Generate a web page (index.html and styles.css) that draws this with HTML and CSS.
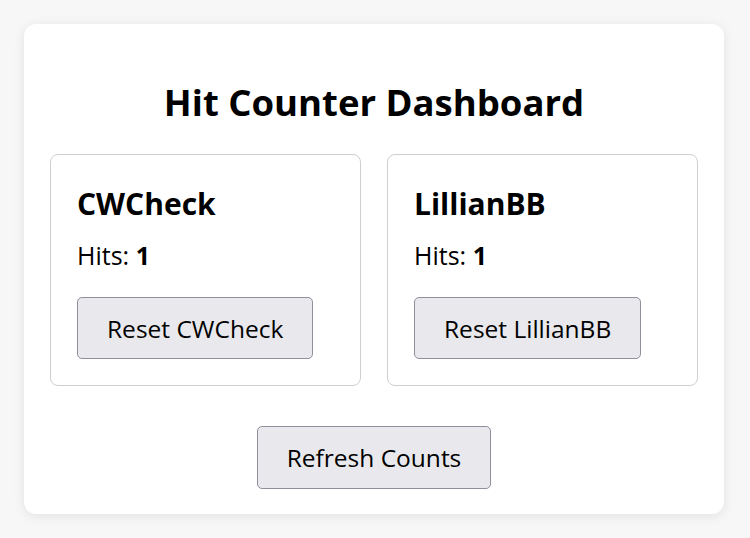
FILE: index.html
```html
<!DOCTYPE html>
<html lang="en">
<head>
<meta charset="utf-8">
<title>Hit Counter Dashboard</title>
<link rel="stylesheet" href="styles.css">
</head>
<body>
<main class="dashboard">
  <h1 class="dashboard-title">Hit Counter Dashboard</h1>
  <div class="counter-grid">
    <section class="counter-card">
      <h2 class="counter-name">CWCheck</h2>
      <p class="counter-hits">Hits: <strong>1</strong></p>
      <button class="btn" type="button">Reset CWCheck</button>
    </section>
    <section class="counter-card">
      <h2 class="counter-name">LillianBB</h2>
      <p class="counter-hits">Hits: <strong>1</strong></p>
      <button class="btn" type="button">Reset LillianBB</button>
    </section>
  </div>
  <div class="actions">
    <button class="btn btn-refresh" type="button">Refresh Counts</button>
  </div>
</main>
</body>
</html>
```
FILE: styles.css
```css
html, body {
  margin: 0;
  padding: 0;
}

body {
  background: #f7f7f7;
  font-family: "Open Sans", "Noto Sans", sans-serif;
  color: #000;
  padding: 24px;
}

.dashboard {
  width: 700px;
  box-sizing: border-box;
  background: #fff;
  border-radius: 12px;
  box-shadow: 0 2px 12px rgba(0, 0, 0, 0.09);
  padding: 54px 26px 25px;
  display: flex;
  flex-direction: column;
}

.dashboard-title {
  margin: 0;
  font-size: 36.5px;
  line-height: 48px;
  font-weight: 700;
  text-align: center;
}

.counter-grid {
  margin-top: 28px;
  display: grid;
  grid-template-columns: 1fr 1fr;
  gap: 26px;
}

.counter-card {
  border: 1px solid #cfcfcf;
  border-radius: 8px;
  padding: 30px 26px 26px;
  display: flex;
  flex-direction: column;
  align-items: flex-start;
}

.counter-name {
  margin: 0;
  font-size: 30px;
  line-height: 38px;
  font-weight: 700;
}

.counter-hits {
  margin: 16px 0 0;
  font-size: 25px;
  line-height: 32px;
}

.counter-hits strong {
  font-weight: 700;
}

.counter-card .btn {
  margin-top: 26px;
}

.btn {
  font-family: inherit;
  font-size: 24.5px;
  line-height: 32px;
  color: #000;
  background: #e9e9ed;
  border: 1px solid #8f8f9d;
  border-radius: 5px;
  padding: 15px 29px 13px;
  cursor: pointer;
}

.btn-refresh {
  padding-bottom: 14px;
}

.actions {
  margin-top: 40px;
  display: flex;
  justify-content: center;
}
```
